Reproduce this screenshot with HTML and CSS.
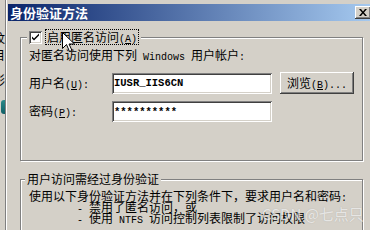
FILE: index.html
```html
<!DOCTYPE html>
<html lang="zh-CN">
<head>
<meta charset="utf-8">
<title>身份验证方法</title>
<link rel="stylesheet" href="styles.css">
</head>
<body>
<div class="screen">
  <div class="bgwin">
    <div class="bg-glyph bg-top">o</div>
    <div class="bg-glyph bg-a">纹</div>
    <div class="bg-glyph bg-b">目</div>
    <div class="bg-glyph bg-c">形</div>
    <div class="bg-icon"></div>
  </div>
  <div class="dialog">
    <div class="titlebar">
      <span class="title">身份验证方法</span>
      <span class="close"><svg width="8" height="7" viewBox="0 0 8 7"><path d="M0 0h2l2 2.5 2-2.5h2l-3 3.5 3 3.5h-2l-2-2.5-2 2.5h-2l3-3.5z" fill="#000"/></svg></span>
    </div>
    <div class="body">
      <fieldset class="group group-anon">
        <legend class="check-legend">
          <span class="checkbox"><svg width="9" height="9" viewBox="0 0 9 9"><path d="M1 3.5v2l2 2 5-5v-2l-5 5z" fill="#000"/></svg></span>
          <span class="focus">启用匿名访问<span class="h">(<u>A</u>)</span></span>
        </legend>
        <p class="desc">对匿名访问使用下列<span class="h"> Windows </span>用户帐户<span class="h">:</span></p>
        <div class="form">
          <label class="lbl">用户名<span class="h">(<u>U</u>):</span></label>
          <input class="field" type="text" value="IUSR_IIS6CN" readonly>
          <button class="btn" type="button">浏览<span class="h">(<u>B</u>)...</span></button>
          <label class="lbl">密码<span class="h">(<u>P</u>):</span></label>
          <input class="field" type="text" value="**********" readonly>
        </div>
      </fieldset>
      <fieldset class="group group-auth">
        <legend class="auth-legend">用户访问需经过身份验证</legend>
        <p class="info first">使用以下身份验证方法并在下列条件下，要求用户名和密码<span class="h">:</span></p>
        <p class="info sub"><span class="h">- </span>禁用了匿名访问，或</p>
        <p class="info sub"><span class="h">- </span>使用<span class="h"> NTFS </span>访问控制列表限制了访问权限</p>
      </fieldset>
    </div>
  </div>
  <svg class="cursor" width="13" height="21" viewBox="0 0 13 21"><path d="M0.5 0.5v16l4-4 3 7 2.5-1-3-6.5h5.5z" fill="#fff" stroke="#000" stroke-width="1"/></svg>
  <div class="watermark">CSDN @七点只</div>
</div>
</body>
</html>
```

FILE: styles.css
```css
html, body {
  margin: 0;
  padding: 0;
}
body {
  width: 370px;
  height: 230px;
  overflow: hidden;
  background: #d4d0c8;
  font-family: "Noto Sans CJK SC", sans-serif;
  font-size: 12px;
  color: #000;
}
.screen {
  position: relative;
  display: flex;
  height: 230px;
  overflow: hidden;
}
.bgwin {
  flex: none;
  width: 5px;
  border-right: 1px solid #808080;
  display: flex;
  flex-direction: column;
  align-items: flex-end;
  overflow: hidden;
  padding-top: 3px;
}
.bg-glyph {
  flex: none;
  width: 12px;
  line-height: 13px;
  font-size: 12px;
  color: #000;
  white-space: nowrap;
}
.bg-top {
  color: #8a8a8a;
  line-height: 15px;
}
.bg-a { margin-top: 13px; }
.bg-b { margin-top: 4px; }
.bg-c { margin-top: 12px; }
.bg-icon {
  flex: none;
  width: 4px;
  height: 14px;
  margin-top: 14px;
  background: linear-gradient(#2a8a8a, #0f5f66);
  border-radius: 3px 0 0 3px;
}
.dialog {
  flex: none;
  width: 365px;
  border-left: 1px solid #fff;
  padding: 4px 0 0 1px;
}
.titlebar {
  height: 17px;
  display: flex;
  align-items: center;
  justify-content: space-between;
  padding: 0 2px;
  background: linear-gradient(to right, #0a246a, #a6caf0);
}
.title {
  color: #fff;
  font-weight: bold;
  font-size: 13px;
  line-height: 17px;
}
.close {
  width: 16px;
  height: 13px;
  display: flex;
  align-items: center;
  justify-content: center;
  background: #d4d0c8;
  box-shadow: inset -1px -1px #404040, inset 1px 1px #fff, inset -2px -2px #808080;
}
.body {
  padding: 7px 10px 0 12px;
}
.group {
  margin: 0;
  border: 1px solid #808080;
  box-shadow: inset 1px 1px #fff, 1px 1px #fff;
  min-width: 0;
}
.group legend {
  background: #d4d0c8;
}
.group-anon {
  padding: 0 8px 38px 6px;
}
.check-legend {
  display: flex;
  align-items: center;
  height: 18px;
  padding: 0 2px;
}
.checkbox {
  flex: none;
  width: 13px;
  height: 13px;
  box-sizing: border-box;
  display: flex;
  align-items: center;
  justify-content: center;
  background: #fff;
  box-shadow: inset 1px 1px #808080, inset -1px -1px #fff, inset 2px 2px #404040, inset -2px -2px #d4d0c8;
  margin-right: 3px;
}
.focus {
  border: 1px dotted #000;
  padding: 0 1px;
  line-height: 14px;
  height: 14px;
}
.h {
  font-family: "Liberation Mono", monospace;
  font-size: 10px;
  line-height: 10px;
  white-space: pre;
}
.desc {
  margin: 2px 0 0 2px;
  line-height: 14px;
  height: 14px;
}
.form {
  display: grid;
  grid-template-columns: 75px 160px 74px;
  grid-template-rows: 22px 21px;
  column-gap: 8px;
  row-gap: 7px;
  align-items: center;
  margin-top: 10px;
  padding-left: 2px;
}
.lbl {
  line-height: 14px;
}
.field {
  width: 160px;
  height: 21px;
  box-sizing: border-box;
  margin: 0;
  border: none;
  outline: none;
  padding: 0 2px;
  background: #fff;
  box-shadow: inset 1px 1px #808080, inset -1px -1px #fff, inset 2px 2px #404040, inset -2px -2px #d4d0c8;
  font-family: "Liberation Mono", monospace;
  font-weight: bold;
  font-size: 10.5px;
  color: #000;
}
.btn {
  width: 74px;
  height: 22px;
  margin: 0;
  padding: 0;
  border: none;
  background: #d4d0c8;
  box-shadow: inset -1px -1px #404040, inset 1px 1px #fff, inset -2px -2px #808080;
  font-family: "Noto Sans CJK SC", sans-serif;
  font-size: 12px;
  line-height: 14px;
  color: #000;
}
.group-auth {
  margin-top: 11px;
  padding: 0 8px 20px 4px;
}
.auth-legend {
  padding: 0 2px;
  line-height: 14px;
}
.info {
  margin: 0;
  padding-left: 4px;
  line-height: 11px;
  height: 11px;
  white-space: nowrap;
}
.info.first {
  margin-top: 4px;
}
.info.sub {
  padding-left: 52px;
}
.cursor {
  position: absolute;
  left: 62px;
  top: 32px;
}
.watermark {
  position: absolute;
  left: 262px;
  top: 203px;
  font-family: "Noto Sans CJK SC", sans-serif;
  font-size: 15px;
  color: rgba(255, 255, 255, 0.7);
  text-shadow: 0 0 1px rgba(110, 110, 110, 0.4);
  white-space: nowrap;
}
```
